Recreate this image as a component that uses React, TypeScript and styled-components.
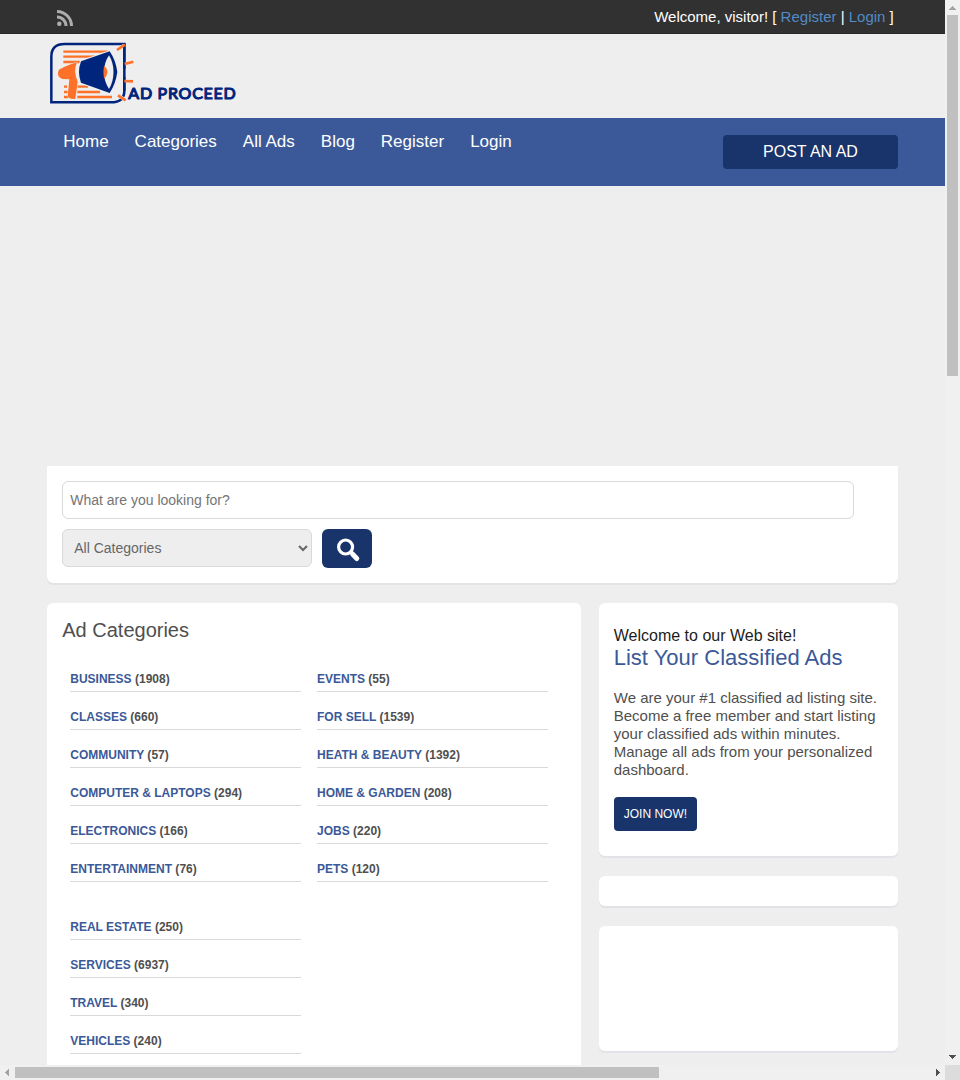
import React from 'react';
import styled, { createGlobalStyle } from 'styled-components';

const GlobalStyle = createGlobalStyle`
  * { box-sizing: border-box; }
  body { margin: 0; background: #eeeeee; font-family: "Liberation Sans", Arial, sans-serif; overflow: hidden; }
  a { text-decoration: none; }
`;

const Frame = styled.div`
  display: grid;
  grid-template-columns: 945px 15px;
  grid-template-rows: 1065px 15px;
  width: 960px;
  height: 1080px;
`;

const Viewport = styled.div`
  overflow: hidden;
  background: #eeeeee;
`;

const TopBar = styled.div`
  display: flex;
  justify-content: space-between;
  height: 34px;
  padding: 0 51.25px 0 57px;
  background: #313131;
  border-bottom: 1px solid #2a262b;
`;

const FeedLink = styled.a`
  height: 17px;
  margin-top: 9px;
  svg { display: block; }
`;

const Welcome = styled.div`
  padding-top: 8px;
  font-size: 15px;
  line-height: 18px;
  color: #ffffff;
  a { color: #528bc5; }
`;

const Masthead = styled.header`
  height: 84px;
  padding: 6px 0 0 48px;
  svg { display: block; }
`;

const NavBar = styled.nav`
  display: flex;
  justify-content: space-between;
  height: 68px;
  padding: 0 47px 0 63.25px;
  background: #3b5998;
`;

const Menu = styled.div`
  display: flex;
  gap: 26px;
  padding-top: 14px;
  font-size: 17px;
  line-height: 20px;
  a { color: #ffffff; }
`;

const PostButton = styled.a`
  width: 175px;
  height: 34px;
  margin-top: 17px;
  border-radius: 4px;
  background: #19336b;
  color: #ffffff;
  font-size: 16px;
  line-height: 34px;
  text-align: center;
`;

const Container = styled.main`
  width: 90%;
  margin: 280px auto 0;
`;

const Panel = styled.section<{ $height?: number; $flatTop?: boolean }>`
  height: ${p => (p.$height ? `${p.$height}px` : 'auto')};
  padding: 15px;
  background: #ffffff;
  border-radius: ${p => (p.$flatTop ? '0 0 6px 6px' : '6px')};
  box-shadow: 0 2px 0 #e2e2e7;
`;

const SearchInput = styled.input`
  display: block;
  width: 792px;
  height: 38px;
  padding: 0 7px;
  border: 1px solid #d9d9d9;
  border-radius: 6px;
  font: 14px "Liberation Sans", Arial, sans-serif;
  &::placeholder { color: #757575; }
`;

const SearchRow = styled.div`
  display: flex;
  gap: 10px;
  margin-top: 10px;
`;

const CategorySelect = styled.select`
  width: 250px;
  height: 38px;
  padding: 0 0 0 7px;
  border: 1px solid #d9d9d9;
  border-radius: 6px;
  background: #eeeeee;
  color: #666666;
  font: 14px "Liberation Sans", Arial, sans-serif;
`;

const SearchButton = styled.button`
  width: 50px;
  height: 39px;
  padding: 0;
  border: 0;
  border-radius: 6px;
  background: #19336b;
  svg { display: block; }
`;

const Columns = styled.div`
  display: grid;
  grid-template-columns: 534px 299px;
  justify-content: space-between;
  margin-top: 20px;
`;

const Heading = styled.h2`
  margin: 0;
  font-size: 20px;
  font-weight: 400;
  line-height: 24px;
  color: #4f4f4f;
`;

const CategoryGrid = styled.div`
  display: grid;
  grid-template-columns: 231px 231px;
  column-gap: 15.75px;
  row-gap: 20px;
  padding: 12px 8px 0;
`;

const CategoryList = styled.ul`
  margin: 0;
  padding: 0;
  list-style: none;
`;

const CategoryItem = styled.li`
  height: 38px;
  padding-top: 18px;
  border-bottom: 1px solid #d9d9d9;
  font-size: 12px;
  font-weight: 700;
  line-height: 14px;
  color: #4f4f4f;
  a { color: #3b5998; }
`;

const Sidebar = styled.aside`
  display: flex;
  flex-direction: column;
  gap: 20px;
`;

const Intro = styled.div`
  padding-top: 8px;
  font-size: 16px;
  line-height: 20px;
  color: #1d1d1d;
`;

const IntroTitle = styled.div`
  font-size: 22px;
  line-height: 24px;
  color: #3b5998;
`;

const IntroText = styled.p`
  margin: 19px 0 18px;
  font-size: 15px;
  line-height: 18px;
  color: #4f4f4f;
`;

const JoinButton = styled.a`
  display: inline-block;
  height: 34px;
  padding: 0 10px;
  border-radius: 4px;
  background: #19336b;
  color: #ffffff;
  font-size: 12px;
  line-height: 34px;
`;

const VerticalBar = styled.div`
  display: flex;
  flex-direction: column;
  justify-content: space-between;
  background: #f0f0f0;
  svg { display: block; }
`;

const VerticalThumb = styled.div`
  width: 11px;
  height: 361px;
  margin: 0 2px 674px;
  background: #c0c0c0;
`;

const HorizontalBar = styled.div`
  display: flex;
  background: #f0f0f0;
  svg { display: block; }
`;

const HorizontalThumb = styled.div`
  width: 644px;
  height: 11px;
  margin: 2px 271px 0 0;
  background: #c0c0c0;
`;

const Corner = styled.div`
  background: #dcdcdc;
`;

const Logo = () => (
  <svg width="190" height="70" viewBox="24 120 570 210" fill="none">
    <path d="M34 307V170Q34 132 74 132H253V272Q253 307 213 307Z" stroke="#00257c" strokeWidth="7.5" />
    <g stroke="#ff7028" strokeWidth="7">
      <path d="M70 155H204M70 170H165M70 186H120M72 260H81M112 260H144M72 276H85M112 276H180M72 291H85M112 291H216" />
    </g>
    <path d="M232 150L254 135M254 192L280 185M253 243L279 244M235 287L257 300" stroke="#eeeeee" strokeWidth="10" />
    <path d="M253 130V206M253 232V272" stroke="#00257c" strokeWidth="7.5" />
    <path d="M231 150L255 134M254 192L280 185M253 243L279 244M234 286L257 301" stroke="#ff7028" strokeWidth="8" />
    <path d="M111 187Q94 191 62 206Q53 210 54 223Q56 234 68 237L88 238L83 290Q92 299 106 296L113 245Q99 214 111 187Z" fill="#ff7028" stroke="#eeeeee" strokeWidth="3" paintOrder="stroke" />
    <path d="M123 184L209 154Q227 180 232 216Q227 252 209 279L123 248Q111 216 123 184Z" fill="#00257c" stroke="#eeeeee" strokeWidth="7" paintOrder="stroke" />
    <path d="M207 166C187 195 187 238 207 267C225 239 225 194 207 166Z" fill="#eeeeee" />
    <path d="M192 197Q202 203 202 217Q201 230 192 236Q188 216 192 197Z" fill="#ff7028" />
    <text x="265" y="296" textLength="322" lengthAdjust="spacing" fill="#00257c" stroke="#00257c" strokeWidth="3.4" strokeLinejoin="round" fontFamily="Lato, sans-serif" fontSize="48" fontWeight="400">AD PROCEED</text>
  </svg>
);

const FeedIcon = () => (
  <svg width="17" height="17" viewBox="0 0 17 17" fill="none" stroke="#adadad" strokeWidth="3">
    <circle cx="2.3" cy="14.8" r="2.25" fill="#adadad" stroke="none" />
    <path d="M0 7.9A9.1 9.1 0 0 1 9.1 17M0 2.5A14.5 14.5 0 0 1 14.5 17" />
  </svg>
);

const SearchIcon = () => (
  <svg width="50" height="39" viewBox="0 0 50 39" fill="none" stroke="#ffffff">
    <circle cx="23.6" cy="18" r="7" strokeWidth="3.2" />
    <path d="M28.5 22.5L30.5 24.5" strokeWidth="3.5" />
    <path d="M30.7 25.2L34.8 29.5" strokeWidth="5" strokeLinecap="round" />
  </svg>
);

const Arrow = ({ d, muted }: { d: string; muted?: boolean }) => (
  <svg width="15" height="15" viewBox="0 0 15 15" fill={muted ? '#a3a3a3' : '#505050'} shapeRendering="crispEdges">
    <path d={d} />
  </svg>
);

const groups: [string, number][][] = [
  [['BUSINESS', 1908], ['CLASSES', 660], ['COMMUNITY', 57], ['COMPUTER & LAPTOPS', 294], ['ELECTRONICS', 166], ['ENTERTAINMENT', 76]],
  [['EVENTS', 55], ['FOR SELL', 1539], ['HEATH & BEAUTY', 1392], ['HOME & GARDEN', 208], ['JOBS', 220], ['PETS', 120]],
  [['REAL ESTATE', 250], ['SERVICES', 6937], ['TRAVEL', 340], ['VEHICLES', 240]],
];

const menu = ['Home', 'Categories', 'All Ads', 'Blog', 'Register', 'Login'];

export default function App() {
  return (
    <Frame>
      <GlobalStyle />
      <Viewport>
        <TopBar>
          <FeedLink><FeedIcon /></FeedLink>
          <Welcome>Welcome, visitor! [ <a>Register</a> | <a>Login</a> ]</Welcome>
        </TopBar>
        <Masthead><Logo /></Masthead>
        <NavBar>
          <Menu>{menu.map(item => <a key={item}>{item}</a>)}</Menu>
          <PostButton>POST AN AD</PostButton>
        </NavBar>
        <Container>
          <Panel $height={117} $flatTop>
            <SearchInput placeholder="What are you looking for?" />
            <SearchRow>
              <CategorySelect><option>All Categories</option></CategorySelect>
              <SearchButton aria-label="Search"><SearchIcon /></SearchButton>
            </SearchRow>
          </Panel>
          <Columns>
            <Panel $height={540}>
              <Heading>Ad Categories</Heading>
              <CategoryGrid>
                {groups.map((group, i) => (
                  <CategoryList key={i}>
                    {group.map(([name, count]) => (
                      <CategoryItem key={name}><a>{name}</a> ({count})</CategoryItem>
                    ))}
                  </CategoryList>
                ))}
              </CategoryGrid>
            </Panel>
            <Sidebar>
              <Panel $height={253}>
                <Intro>Welcome to our Web site!</Intro>
                <IntroTitle>List Your Classified Ads</IntroTitle>
                <IntroText>We are your #1 classified ad listing site. Become a free member and start listing your classified ads within minutes. Manage all ads from your personalized dashboard.</IntroText>
                <JoinButton>JOIN NOW!</JoinButton>
              </Panel>
              <Panel $height={30} />
              <Panel $height={125} />
            </Sidebar>
          </Columns>
        </Container>
      </Viewport>
      <VerticalBar>
        <Arrow muted d="M4 10V9H5V8H6V7H7V6H8V7H9V8H10V9H11V10Z" />
        <VerticalThumb />
        <Arrow d="M4 5H11V6H10V7H9V8H8V9H7V8H6V7H5V6H4Z" />
      </VerticalBar>
      <HorizontalBar>
        <Arrow muted d="M9 4V11H8V10H7V9H6V8H5V7H6V6H7V5H8V4Z" />
        <HorizontalThumb />
        <Arrow d="M6 4H7V5H8V6H9V7H10V8H9V9H8V10H7V11H6Z" />
      </HorizontalBar>
      <Corner />
    </Frame>
  );
}
